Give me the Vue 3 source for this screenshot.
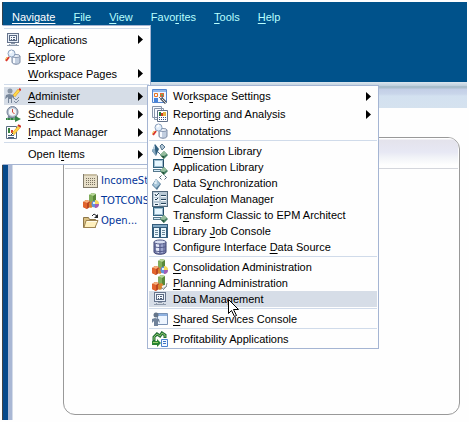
<script setup>
const menuBar = [
  ['', 'Navigate', ''],
  ['', 'F', 'ile'],
  ['', 'V', 'iew'],
  ['Favo', 'r', 'ites'],
  ['', 'T', 'ools'],
  ['', 'H', 'elp']
]

const navigateMenu = [
  {
    size: 'compact',
    items: [
      { icon: 'monitor', label: ['A', 'p', 'plications'], sub: true },
      { icon: 'explore', label: ['', 'E', 'xplore'] },
      { label: ['', 'W', 'orkspace Pages'], sub: true }
    ]
  },
  {
    size: 'roomy',
    items: [
      { icon: 'admin', label: ['', 'A', 'dminister'], sub: true, active: true },
      { icon: 'schedule', label: ['', 'S', 'chedule'], sub: true },
      { icon: 'impact', label: ['', 'I', 'mpact Manager'], sub: true }
    ]
  },
  { size: 'roomy', items: [{ label: ['Open I', 't', 'ems'], sub: true }] }
]

const administerMenu = [
  {
    size: 'roomy',
    items: [
      { icon: 'settings', label: ['Wo', 'r', 'kspace Settings'], sub: true },
      { icon: 'reports', label: ['Reporti', 'n', 'g and Analysis'], sub: true },
      { icon: 'explore', label: ['Annotat', 'i', 'ons'], short: true }
    ]
  },
  {
    size: 'tight',
    items: [
      { icon: 'dimension', label: ['Di', 'm', 'ension Library'] },
      { icon: 'applib', label: ['Application Library', '', ''] },
      { icon: 'sync', label: ['Data S', 'y', 'nchronization'] },
      { icon: 'calc', label: ['Calcula', 't', 'ion Manager'] },
      { icon: 'applib', label: ['Tr', 'a', 'nsform Classic to EPM Architect'] },
      { icon: 'console', label: ['Library ', 'J', 'ob Console'] },
      { icon: 'database', label: ['Configure Interface ', 'D', 'ata Source'] }
    ]
  },
  {
    size: 'tight',
    items: [
      { icon: 'consolidation', label: ['', 'C', 'onsolidation Administration'] },
      { icon: 'planning', label: ['', 'P', 'lanning Administration'] },
      { icon: 'monitor', label: ['Data Management', '', ''], active: true }
    ]
  },
  { size: 'tight', items: [{ icon: 'shared', label: ['', 'S', 'hared Services Console'] }] },
  { size: 'tight', items: [{ icon: 'profit', label: ['Profitability Applications', '', ''] }] }
]

const menus = [
  { name: 'navigate', title: 'Navigate', groups: navigateMenu },
  { name: 'administer', title: 'Administer', groups: administerMenu }
]

const recent = [
  { icon: 'grid', label: 'IncomeSt' },
  { icon: 'consolidation', label: 'TOTCONS' },
  { icon: 'folder', label: 'Open...' }
]
</script>

<template>
  <div class="workspace">
    <svg class="defs" aria-hidden="true">
      <symbol id="monitor" viewBox="0 0 16 16">
        <path d="M2 1h12v10H2z" fill="#66748c" />
        <path d="M3 2h10v8H3z" fill="#e8eff8" />
        <path d="M4 3h8v6H4z" fill="#5a6982" />
        <path d="M5 4h6v4H5z" fill="#f4f8fc" />
        <path d="M6 5h1v1H6zM8 5h2v1H8zM6 7h1v1H6zM8 7h2v1H8z" fill="#4c5c78" />
        <path d="M6 11h4v1H6zM4 12h8v1H4zM2 13h12v1H2z" fill="#8d99aa" />
        <path d="M5 12h6v1H5z" fill="#d5dbe4" />
      </symbol>
      <symbol id="explore" viewBox="0 0 16 16">
        <path d="M7 7v6c0 3 8 3 8 0V7z" fill="#c2cedf" stroke="#7d8ba4" />
        <path d="M9 8v6" stroke="#f7faff" stroke-width="2" />
        <ellipse cx="11" cy="7" rx="4" ry="1.5" fill="#edf3fa" stroke="#8796af" />
        <circle cx="6.5" cy="4.5" r="3.5" fill="#e3eefa" stroke="#8ba0bd" />
        <path d="M5 4l2-2" stroke="#fff" stroke-width="2" />
        <path d="M4 8L1 12" stroke="#d9372c" stroke-width="2" />
        <path d="M2 8L0 11" stroke="#f3c044" />
      </symbol>
      <symbol id="admin" viewBox="0 0 16 16">
        <circle cx="5" cy="3" r="2.5" fill="#8a96a6" />
        <path d="M1 7l3-1 5 1v4l-2-2v6H6v-4H4v4H3V9L0 11z" fill="#77869a" />
        <path d="M9 8l5-6" stroke="#d99a25" stroke-width="3" />
        <path d="M9 8l5-6" stroke="#ffd94c" stroke-width="2" />
        <path d="M14 1l2 1" stroke="#d43429" stroke-width="2" />
        <path d="M9 10l2 2 3-3M9 13l2 2 3-3" stroke="#7e8ba0" fill="none" />
      </symbol>
      <symbol id="schedule" viewBox="0 0 16 16">
        <path d="M3 10h9l1 4H2z" fill="#7b8a9e" />
        <circle cx="7.5" cy="6" r="5.5" fill="#aeb9c9" stroke="#76839a" />
        <circle cx="7.5" cy="6" r="3.8" fill="#f4f6f9" />
        <path d="M7.5 3v3l2 2" fill="none" stroke="#d14838" />
        <path d="M1 12h9v-2l6 3-6 3v-2H1z" fill="#338346" />
        <path d="M2 13h1M5 13h1M8 13h2" stroke="#a3d1a5" />
      </symbol>
      <symbol id="impact" viewBox="0 0 16 16">
        <path d="M1.5 2.5h10v12h-10z" fill="#fff" stroke="#5a6b82" />
        <path d="M3 4h2v5H3z" fill="#36803e" />
        <path d="M6 6h2v3H6z" fill="#d33d2d" />
        <path d="M3 11.5h6M3 13.5h6" stroke="#49617e" />
        <path d="M8 10l6-7" stroke="#d99a25" stroke-width="3" />
        <path d="M8 10l6-7" stroke="#ffd34a" stroke-width="2" />
        <path d="M13 1l3 2" stroke="#c83326" stroke-width="2" />
        <path d="M6 11l2-2" stroke="#393939" />
      </symbol>
      <symbol id="settings" viewBox="0 0 16 16">
        <path d="M.5 1.5h14v13H.5z" fill="#eff6ff" stroke="#5486cf" />
        <path d="M1 2h13v2H1z" fill="#91b8ec" />
        <path d="M2.5 5.500h3v3h-3z" fill="none" stroke="#e87422" />
        <path d="M8 5h4v4H8z" fill="#e16536" />
        <path d="M9 6h2v2H9z" fill="#77b449" />
        <path d="M2 10h4v4H2z" fill="#4985da" />
        <path d="M9 10l5 5" stroke="#4e5660" stroke-width="3" />
        <path d="M9 10l5 5" stroke="#d5dae0" />
        <path d="M7 9l2 2 2-2-1-2" fill="none" stroke="#68717c" />
      </symbol>
      <symbol id="reports" viewBox="0 0 16 16">
        <path d="M.5 .5h9v11h-9zM2.5 2.5h9v11h-9z" fill="#f8faff" stroke="#8795aa" />
        <path d="M5.5 4.5h10v11h-10z" fill="#fff" stroke="#62718a" />
        <path d="M7 6h2v4H7z" fill="#267c40" />
        <path d="M9 7h2v3H9z" fill="#d03928" />
        <path d="M11 6h3v4h-3z" fill="#e6b541" />
        <path d="M7 11.5h7M7 13.5h7" stroke="#334f82" stroke-dasharray="1 1" />
      </symbol>
      <symbol id="gem" viewBox="0 0 8 8">
        <path d="M4 0l4 4-4 4-4-4z" fill="#437d61" />
        <path d="M4 0l3 3-3 2-4-1z" fill="#96bd9e" />
        <path d="M4 5v3L1 5z" fill="#28583f" />
      </symbol>
      <symbol id="dimension" viewBox="0 0 16 16">
        <path d="M3 1l4 5-3 7-4-5z" fill="#325f7e" />
        <path d="M3 1v5l1 7-4-5z" fill="#8eaec4" />
        <path d="M2 3v3" stroke="#e4eff8" />
        <path d="M8 3l2-2 3 3-3 3zM6 9l3 3" fill="#b2c6d6" stroke="#54748c" />
        <use href="#gem" x="8" y="8" width="8" height="8" />
      </symbol>
      <symbol id="applib" viewBox="0 0 16 16">
        <path d="M1 0h11v9H1z" fill="#326480" />
        <path d="M2 1h9v7H2z" fill="#9ebbcd" />
        <path d="M3 2h7v5H3z" fill="#e7f7ff" />
        <path d="M11 1h1v8h-1z" fill="#254d69" />
        <path d="M1 10h8l2 3H1z" fill="#55788d" />
        <path d="M2 11.5h6" stroke="#d8edf9" />
        <use href="#gem" x="8" y="8" width="8" height="8" />
      </symbol>
      <symbol id="sync" viewBox="0 0 16 16">
        <path d="M4 4l5 5-4 6-5-5z" fill="#527995" />
        <path d="M4 4l4 5-4 4-3-3z" fill="#a8c6d9" />
        <path d="M4 5v4M2 8h2" stroke="#f6fcff" />
        <path d="M9.5 .5l-2 2 2 2M12.5 .5l2 2-2 2" fill="none" stroke="#4f6273" />
      </symbol>
      <symbol id="calc" viewBox="0 0 16 16">
        <path d="M0 0h16v16H0z" fill="#51677b" />
        <path d="M1 1h14v14H1z" fill="#b9c9d5" />
        <path d="M2 2h5v4H2zM2 7h5v3H2zM2 12h5v3H2z" fill="#edf4f9" />
        <path d="M3 3l1 2 3-3M3 8l1 1 2-2M3 13.5h3" fill="none" stroke="#223c52" />
        <path d="M9 4.5h5M9 8.5h5M9 12.5h5" stroke="#28465d" />
        <path d="M9 5.5h5M9 9.5h5M9 13.5h5" stroke="#f7fbff" />
      </symbol>
      <symbol id="console" viewBox="0 0 16 16">
        <path d="M0 1h16v14H0z" fill="#345d7c" />
        <path d="M1 2h14v2H1z" fill="#80a7c3" />
        <path d="M2 5h5v9H2zM9 5h5v9H9z" fill="#eaf6fc" />
        <path d="M3 7.5h3M3 9.5h3M3 11.5h3M10 7.5h3M10 9.5h3M10 11.5h3" stroke="#69879b" />
      </symbol>
      <symbol id="database" viewBox="0 0 16 16">
        <path d="M2 3v10c0 3 12 3 12 0V3z" fill="#777eaa" stroke="#3e4474" />
        <path d="M4 4h3v10L4 13z" fill="#e6e9f8" />
        <path d="M9 5h2v9H9z" fill="#9da5cd" />
        <path d="M2 7c0 2 12 2 12 0M2 11c0 2 12 2 12 0" fill="none" stroke="#535a8a" />
        <ellipse cx="8" cy="3" rx="6" ry="2" fill="#d9def1" stroke="#545b88" />
      </symbol>
      <symbol id="blocks" viewBox="0 0 16 16">
        <path d="M6 2l3-2 4 1v9l-4 2-3-2z" fill="#598739" />
        <path d="M6 2l3-2 4 1-3 2z" fill="#b8d998" />
        <path d="M6 2l4 1v8l-4-2z" fill="#80ad5b" />
        <path d="M0 9l3-2 4 1v6l-3 2-4-2z" fill="#ba4520" />
        <path d="M0 9l3-2 4 1-3 2z" fill="#f8b17b" />
        <path d="M0 9l4 1v6l-4-2z" fill="#e2632c" />
        <path d="M6 10l3-2 2 1v4l-3 2-2-1z" fill="#d6832f" />
      </symbol>
      <symbol id="consolidation" viewBox="0 0 16 16">
        <use href="#blocks" width="16" height="16" />
        <circle cx="12" cy="11" r="3.5" fill="#5f92de" />
        <path d="M12 11V7a4 4 0 0 1 4 4z" fill="#f7d960" />
        <path d="M12 11h4a4 4 0 0 1-4 4z" fill="#a45eb4" />
        <path d="M10 9h2v2h-2z" fill="#dff2ff" />
      </symbol>
      <symbol id="planning" viewBox="0 0 16 16">
        <use href="#blocks" width="16" height="16" />
        <path d="M9 14l5-2 1-4M11 15l4-4" fill="none" stroke="#8e9499" />
        <path d="M10 12l3-1" stroke="#f3f3f3" stroke-width="2" />
      </symbol>
      <symbol id="shared" viewBox="0 0 16 16">
        <path d="M5.5 2.5h10v11h-10z" fill="#edf5ff" stroke="#7992b5" />
        <path d="M6 3h9v2H6z" fill="#8fb1df" />
        <circle cx="4" cy="4" r="2.5" fill="#657589" />
        <path d="M0 8l3-1 4 1 1 4-2-2v5H2v-5l-2 2z" fill="#71839a" />
      </symbol>
      <symbol id="profit" viewBox="0 0 16 16">
        <path d="M2 10V6l3-3 3 2 2-3 3 2v3" fill="none" stroke="#226d35" stroke-width="3" />
        <path d="M2 9V6l3-3 3 2 2-3 3 2v2" fill="none" stroke="#8cc96d" />
        <path d="M0 10h5v-2l4 4-4 4v-2H0z" fill="#288332" />
        <path d="M1 11.5h5" stroke="#98ce6c" />
        <path d="M9.5 8.5h6v7h-6z" fill="#f3f8ff" stroke="#4c82cf" />
        <path d="M11 10.5h3M11 12.5h3" stroke="#3d74c5" />
      </symbol>
      <symbol id="grid" viewBox="0 0 16 16">
        <path d="M0 1h13l2 2v12H0z" fill="#817b6b" />
        <path d="M1 1h12l1 2v11H1z" fill="#e7dfc8" />
        <path d="M1 1h12v2H1z" fill="#c8bea3" />
        <path d="M3 5.5h9M3 7.5h9M3 9.5h9M3 11.5h9" stroke="#797261" stroke-dasharray="1 1" />
      </symbol>
      <symbol id="folder" viewBox="0 0 16 16">
        <path d="M.5 4.5h5l1 2h6v8h-12z" fill="#d9bf82" stroke="#8c7547" />
        <path d="M3 7.5h12l-3 7H1z" fill="#fff0bd" stroke="#9e8452" />
        <path d="M4 8.5h10" stroke="#fffbea" />
        <path d="M9 3l2-2 3 2" fill="none" stroke="#25292e" />
        <path d="M11 5h4V1z" fill="#25292e" />
      </symbol>
    </svg>

    <header class="banner">
      <nav class="menubar" aria-label="Main menu">
        <button v-for="(item, i) in menuBar" :key="i" type="button" :class="{ open: i === 0 }">
          {{ item[0] }}<u>{{ item[1] }}</u>{{ item[2] }}
        </button>
      </nav>
    </header>

    <div class="body">
      <div class="rail"></div>
      <main class="content">
        <div class="toolbar"></div>
        <section class="panel" aria-label="Recent items">
          <div class="panel-head"></div>
          <ul class="recent">
            <li v-for="item in recent" :key="item.label">
              <a href="#"><svg class="icon" aria-hidden="true"><use :href="'#' + item.icon" /></svg>{{ item.label }}</a>
            </li>
          </ul>
        </section>
      </main>
    </div>

    <div v-for="menu in menus" :key="menu.name" class="menu" :class="menu.name" role="menu" :aria-label="menu.title">
      <div v-for="(group, g) in menu.groups" :key="g" class="group" :class="group.size" role="group">
        <button
          v-for="item in group.items"
          :key="item.label.join('')"
          type="button"
          role="menuitem"
          :class="{ active: item.active, short: item.short }"
        >
          <svg class="icon" aria-hidden="true"><use v-if="item.icon" :href="'#' + item.icon" /></svg>
          <span class="label">{{ item.label[0] }}<u>{{ item.label[1] }}</u>{{ item.label[2] }}</span>
          <svg v-if="item.sub" class="arrow" viewBox="0 0 5 9" aria-hidden="true"><path d="M0 0l5 4.5L0 9z" /></svg>
        </button>
      </div>
    </div>

    <svg class="pointer" viewBox="0 0 13 20" aria-hidden="true">
      <path d="M1.5 1.5v14l3-3 3 6 2-1-3-6h5z" />
    </svg>
  </div>
</template>

<style>
body {
  margin: 0;
  background: #fefefe;
}
</style>

<style scoped>
.workspace {
  position: relative;
  display: flex;
  flex-direction: column;
  box-sizing: border-box;
  min-height: 100vh;
  padding: 2px;
  font: 11px/16px "Liberation Sans", Arial, sans-serif;
  color: #000;
}
.defs {
  position: absolute;
  width: 0;
  height: 0;
}
button {
  margin: 0;
  padding: 0;
  border: 0;
  background: none;
  font: inherit;
  color: inherit;
  white-space: nowrap;
}
u {
  text-underline-offset: 2px;
  text-decoration-thickness: 1px;
}
.icon {
  flex: none;
  width: 16px;
  height: 16px;
}
.banner {
  box-sizing: border-box;
  height: 80px;
  padding: 7px 9px;
  background: #00528b;
  border-left: 1px solid #34424d;
}
.menubar {
  display: flex;
  gap: 18px;
  color: #b8ffff;
}
.menubar .open {
  color: #fff;
}
.body {
  display: flex;
  flex: 1;
}
.rail {
  box-sizing: border-box;
  width: 11px;
  border-left: 1px solid #444;
  background: linear-gradient(90deg, #074a8b 5px, #a9b7d4 5px 9px, #d4dce9 9px);
}
.content {
  display: flex;
  flex: 1;
  flex-direction: column;
}
.toolbar {
  height: 26px;
  background: linear-gradient(#dbe6ef 0, #bccddb 4px, #a9bdcb 4px, #a9bdcb 6px, #c3cee6 7px, #c9d6ea 12px, #d3e1f0 14px, #d5e2ef 26px);
}
.panel {
  flex: 1;
  margin: 29px 7px 5px 50px;
  border: 1px solid #999;
  border-radius: 12px;
  overflow: hidden;
}
.panel-head {
  height: 30px;
  margin: 0 1px;
  border-bottom: 1px solid #d4d6dc;
  background: linear-gradient(#fff 1px, #e4e3ec 2px, #e7e8f4 14px, #f2f4f8 20px, #fefefe 27px);
}
.recent {
  display: flex;
  flex-direction: column;
  gap: 4px;
  margin: 0;
  padding: 4px 19px;
  list-style: none;
  font: 10px/16px "DejaVu Sans", Verdana, sans-serif;
}
.recent a {
  display: flex;
  gap: 2px;
  color: #003399;
  text-decoration: none;
}
.menu {
  position: absolute;
  box-sizing: border-box;
  padding: 1px;
  border: 1px solid #a5b5d3;
  background: #fefefe;
}
.navigate {
  top: 25px;
  left: 2px;
  width: 149px;
  border-left-color: #fefefe;
}
.administer {
  top: 85px;
  left: 147px;
  width: 232px;
}
.group {
  display: flex;
  flex-direction: column;
}
.group + .group,
.navigate .group:first-child {
  margin-top: 1px;
  padding-top: 2px;
  border-top: 1px solid #d0dbea;
}
.navigate .compact {
  padding-bottom: 1px;
}
.group button {
  display: flex;
  align-items: center;
  height: 16px;
  padding: 0 6px 0 3px;
  text-align: left;
}
.navigate button {
  padding-left: 1px;
}
.compact button {
  height: 17px;
}
.roomy button {
  height: 18px;
}
.roomy .short {
  height: 16px;
}
.label {
  flex: 1;
  padding-left: 5px;
}
.navigate .label {
  padding-left: 7px;
}
.group .active {
  background: #d6dde7;
}
.arrow {
  width: 5px;
  height: 9px;
}
.pointer {
  position: absolute;
  top: 298px;
  left: 227px;
  width: 13px;
  height: 20px;
  fill: #fff;
  stroke: #000;
}
</style>
